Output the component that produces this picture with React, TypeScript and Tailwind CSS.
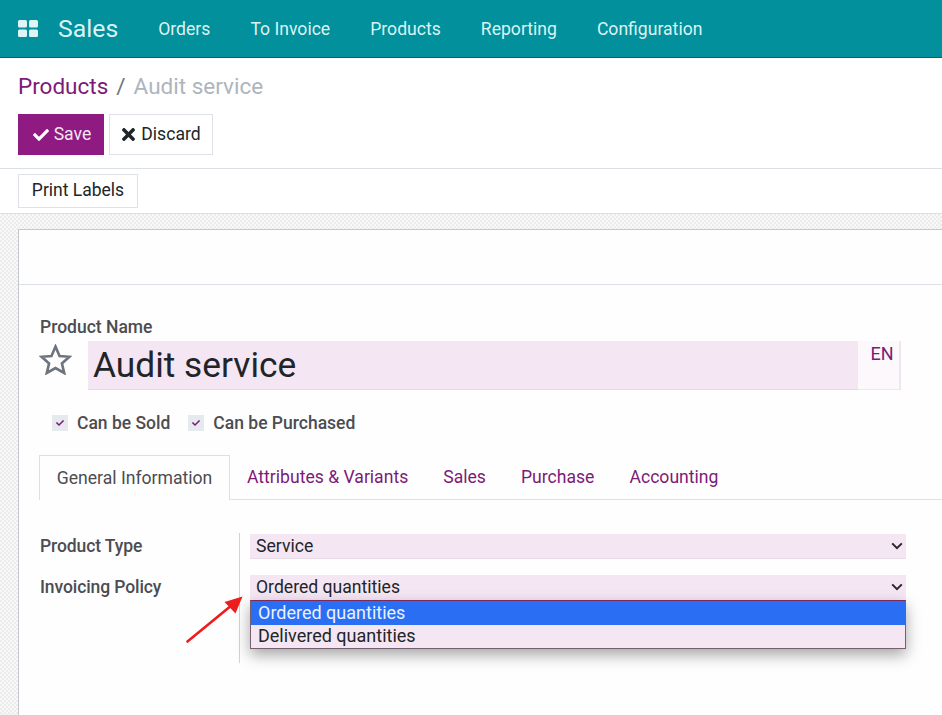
import { FC } from "react";
import { FaCheck, FaTimes } from "react-icons/fa";

const NAV_ITEMS = ["Orders", "To Invoice", "Products", "Reporting", "Configuration"];
const TABS = ["Attributes & Variants", "Sales", "Purchase", "Accounting"];

const Chevron: FC = () => (
  <svg width="12" height="8" viewBox="0 0 12 8" fill="none" className="shrink-0">
    <path d="M1.2 1.4 L6 6.2 L10.8 1.4" stroke="#2b2530" strokeWidth="2" />
  </svg>
);

const CheckItem: FC<{ label: string }> = ({ label }) => (
  <div className="flex items-center gap-[9px]">
    <span className="flex h-4 w-4 items-center justify-center bg-[#e6e9ed]">
      <FaCheck size={8} className="text-[#7c1a78]" />
    </span>
    <span className="text-[17.5px] font-medium text-[#4c4c52]">{label}</span>
  </div>
);

const App: FC = () => {
  return (
    <div className="flex h-[715px] w-[942px] flex-col overflow-hidden bg-white font-['Roboto',sans-serif] text-[#212529]">
      <header className="flex h-[58px] shrink-0 items-center border-b border-[#0b5f66] bg-[#01909c] pl-[18px] text-[#dcf3f3]">
        <svg width="20" height="17" viewBox="0 0 20 17" className="mr-[20px] shrink-0" fill="#dff5f5">
          <rect x="0" y="0" width="9" height="7.5" rx="1.5" />
          <rect x="11" y="0" width="9" height="7.5" rx="1.5" />
          <rect x="0" y="9.5" width="9" height="7.5" rx="1.5" />
          <rect x="11" y="9.5" width="9" height="7.5" rx="1.5" />
        </svg>
        <span className="mr-[40px] text-[24.8px]">Sales</span>
        <nav className="flex gap-[40px] pt-[1px] text-[17.6px]">
          {NAV_ITEMS.map((item) => (
            <span key={item}>{item}</span>
          ))}
        </nav>
      </header>

      <div className="shrink-0 px-[18px] pt-[14px]">
        <div className="flex h-[30px] items-center text-[22.5px]">
          <span className="text-[#7c1a78]">Products</span>
          <span className="mx-[8px] text-[#6c757d]">/</span>
          <span className="text-[#adb5bd]">Audit service</span>
        </div>
        <div className="mt-[12px] flex gap-[5px] text-[17.6px]">
          <button className="flex h-[41px] w-[86px] items-center justify-center gap-[5px] bg-[#8f1a82] pl-[2px] text-[#f3e6f1]">
            <FaCheck size={16} className="text-white" />
            Save
          </button>
          <button className="flex h-[41px] w-[104px] items-center justify-center gap-[6px] border border-[#dee2e6] pl-[1px] text-[#212529]">
            <FaTimes size={19} className="-mx-[3px]" />
            Discard
          </button>
        </div>
      </div>

      <div className="mt-[13px] h-[45px] shrink-0 border-t border-[#dcdfe3] px-[18px] pt-[5px]">
        <button className="flex h-[34px] w-[120px] items-center justify-center border border-[#dee2e6] pb-[2px] text-[17.5px]">
          Print Labels
        </button>
      </div>

      <main className="flex-1 border-t border-[#dcdfe3] bg-[repeating-conic-gradient(#ececec_0_25%,#f8f8f8_0_50%)] bg-[length:4px_4px] pt-[15px] pl-[18px]">
        <div className="relative h-full border-t border-l border-[#c4c7cb] bg-[#fefefe]">
          <div className="h-[55px] border-b border-[#dee2e6]" />

          <div className="pt-[32px] pl-[21px]">
            <div className="h-[20px] text-[17.5px] leading-[20px] font-medium text-[#4c4c52]">Product Name</div>
            <div className="mt-[4px] flex items-start">
              <svg width="33" height="31" viewBox="0 0 33 31" fill="none" className="mt-[3px] mr-[15px] -ml-[1px] shrink-0">
                <path
                  d="M16.5 2.6 L20.5 12 L30.4 12.8 L22.9 19.4 L25.2 29 L16.5 24 L7.8 29 L10.1 19.4 L2.6 12.8 L12.5 12 Z"
                  stroke="#6e747b"
                  strokeWidth="2.6"
                  strokeLinejoin="miter"
                />
              </svg>
              <div className="ml-[1px] flex h-[49px] w-[770px] items-center border-b border-[#dcdfe3] bg-[#f5e6f3] pl-[5px] text-[35.3px] text-[#212529]">
                Audit service
              </div>
              <div className="flex h-[49px] w-[43px] justify-center border-r-2 border-b border-[#efe6ee] bg-[#fdf8fc] pl-[7px] text-[18px] leading-[25px] text-[#7c1a78]">
                EN
              </div>
            </div>

            <div className="mt-[20px] flex gap-[18px] pl-[12px]">
              <CheckItem label="Can be Sold" />
              <CheckItem label="Can be Purchased" />
            </div>

            <div className="mt-[19px] -ml-[1px] flex h-[45px] border-b border-[#dee2e6] text-[17.6px]">
              <div className="flex h-[45px] w-[191px] items-center justify-center border-x border-t border-[#dcdfe3] bg-[#fefefe] text-[#4c4c52]">
                General Information
              </div>
              <div className="flex items-center gap-[35px] pl-[17px] text-[#7c1a78]">
                {TABS.map((tab) => (
                  <span key={tab}>{tab}</span>
                ))}
              </div>
            </div>

            <div className="mt-[33px] flex h-[130px]">
              <div className="w-[200px] shrink-0 border-r border-[#ced4da] pt-[1px] text-[17.5px] font-medium tracking-[-0.1px] text-[#4c4c52]">
                <div className="h-[25px] leading-[25px]">Product Type</div>
                <div className="mt-[16px] h-[25px] leading-[25px]">Invoicing Policy</div>
              </div>
              <div className="relative ml-[10px] w-[656px] text-[17.6px]">
                <div className="mt-[1px] flex h-[25px] items-center justify-between border-b border-[#e6dce6] bg-[#f5e6f3] pr-[3px] pl-[6px]">
                  Service
                  <Chevron />
                </div>
                <div className="mt-[16px] flex h-[25px] items-center justify-between bg-[#f5e6f3] pr-[3px] pl-[6px] pb-[1px]">
                  Ordered quantities
                  <Chevron />
                </div>
                <div className="absolute top-[67px] left-0 w-[656px] border border-[#76606f] border-t-[#7c2a5c] bg-[#f5e6f3] text-[18px] shadow-[0_6px_14px_rgba(0,0,0,0.35)]">
                  <div className="flex h-[24px] items-center bg-[#2a6ff3] pb-[2px] pl-[7px] text-[#eaf2ff]">Ordered quantities</div>
                  <div className="flex h-[23px] items-center pb-[2px] pl-[7px]">Delivered quantities</div>
                </div>
              </div>
            </div>
          </div>

          <svg width="60" height="50" viewBox="0 0 60 50" className="absolute top-[364px] left-[167px]">
            <path d="M1.5 47.5 L46 11" stroke="#ee1c1c" strokeWidth="2.6" strokeLinecap="round" />
            <path d="M56.5 2.5 L49.5 19.5 L38.5 8 Z" fill="#ee1c1c" />
          </svg>
        </div>
      </main>
    </div>
  );
};

export default App;
